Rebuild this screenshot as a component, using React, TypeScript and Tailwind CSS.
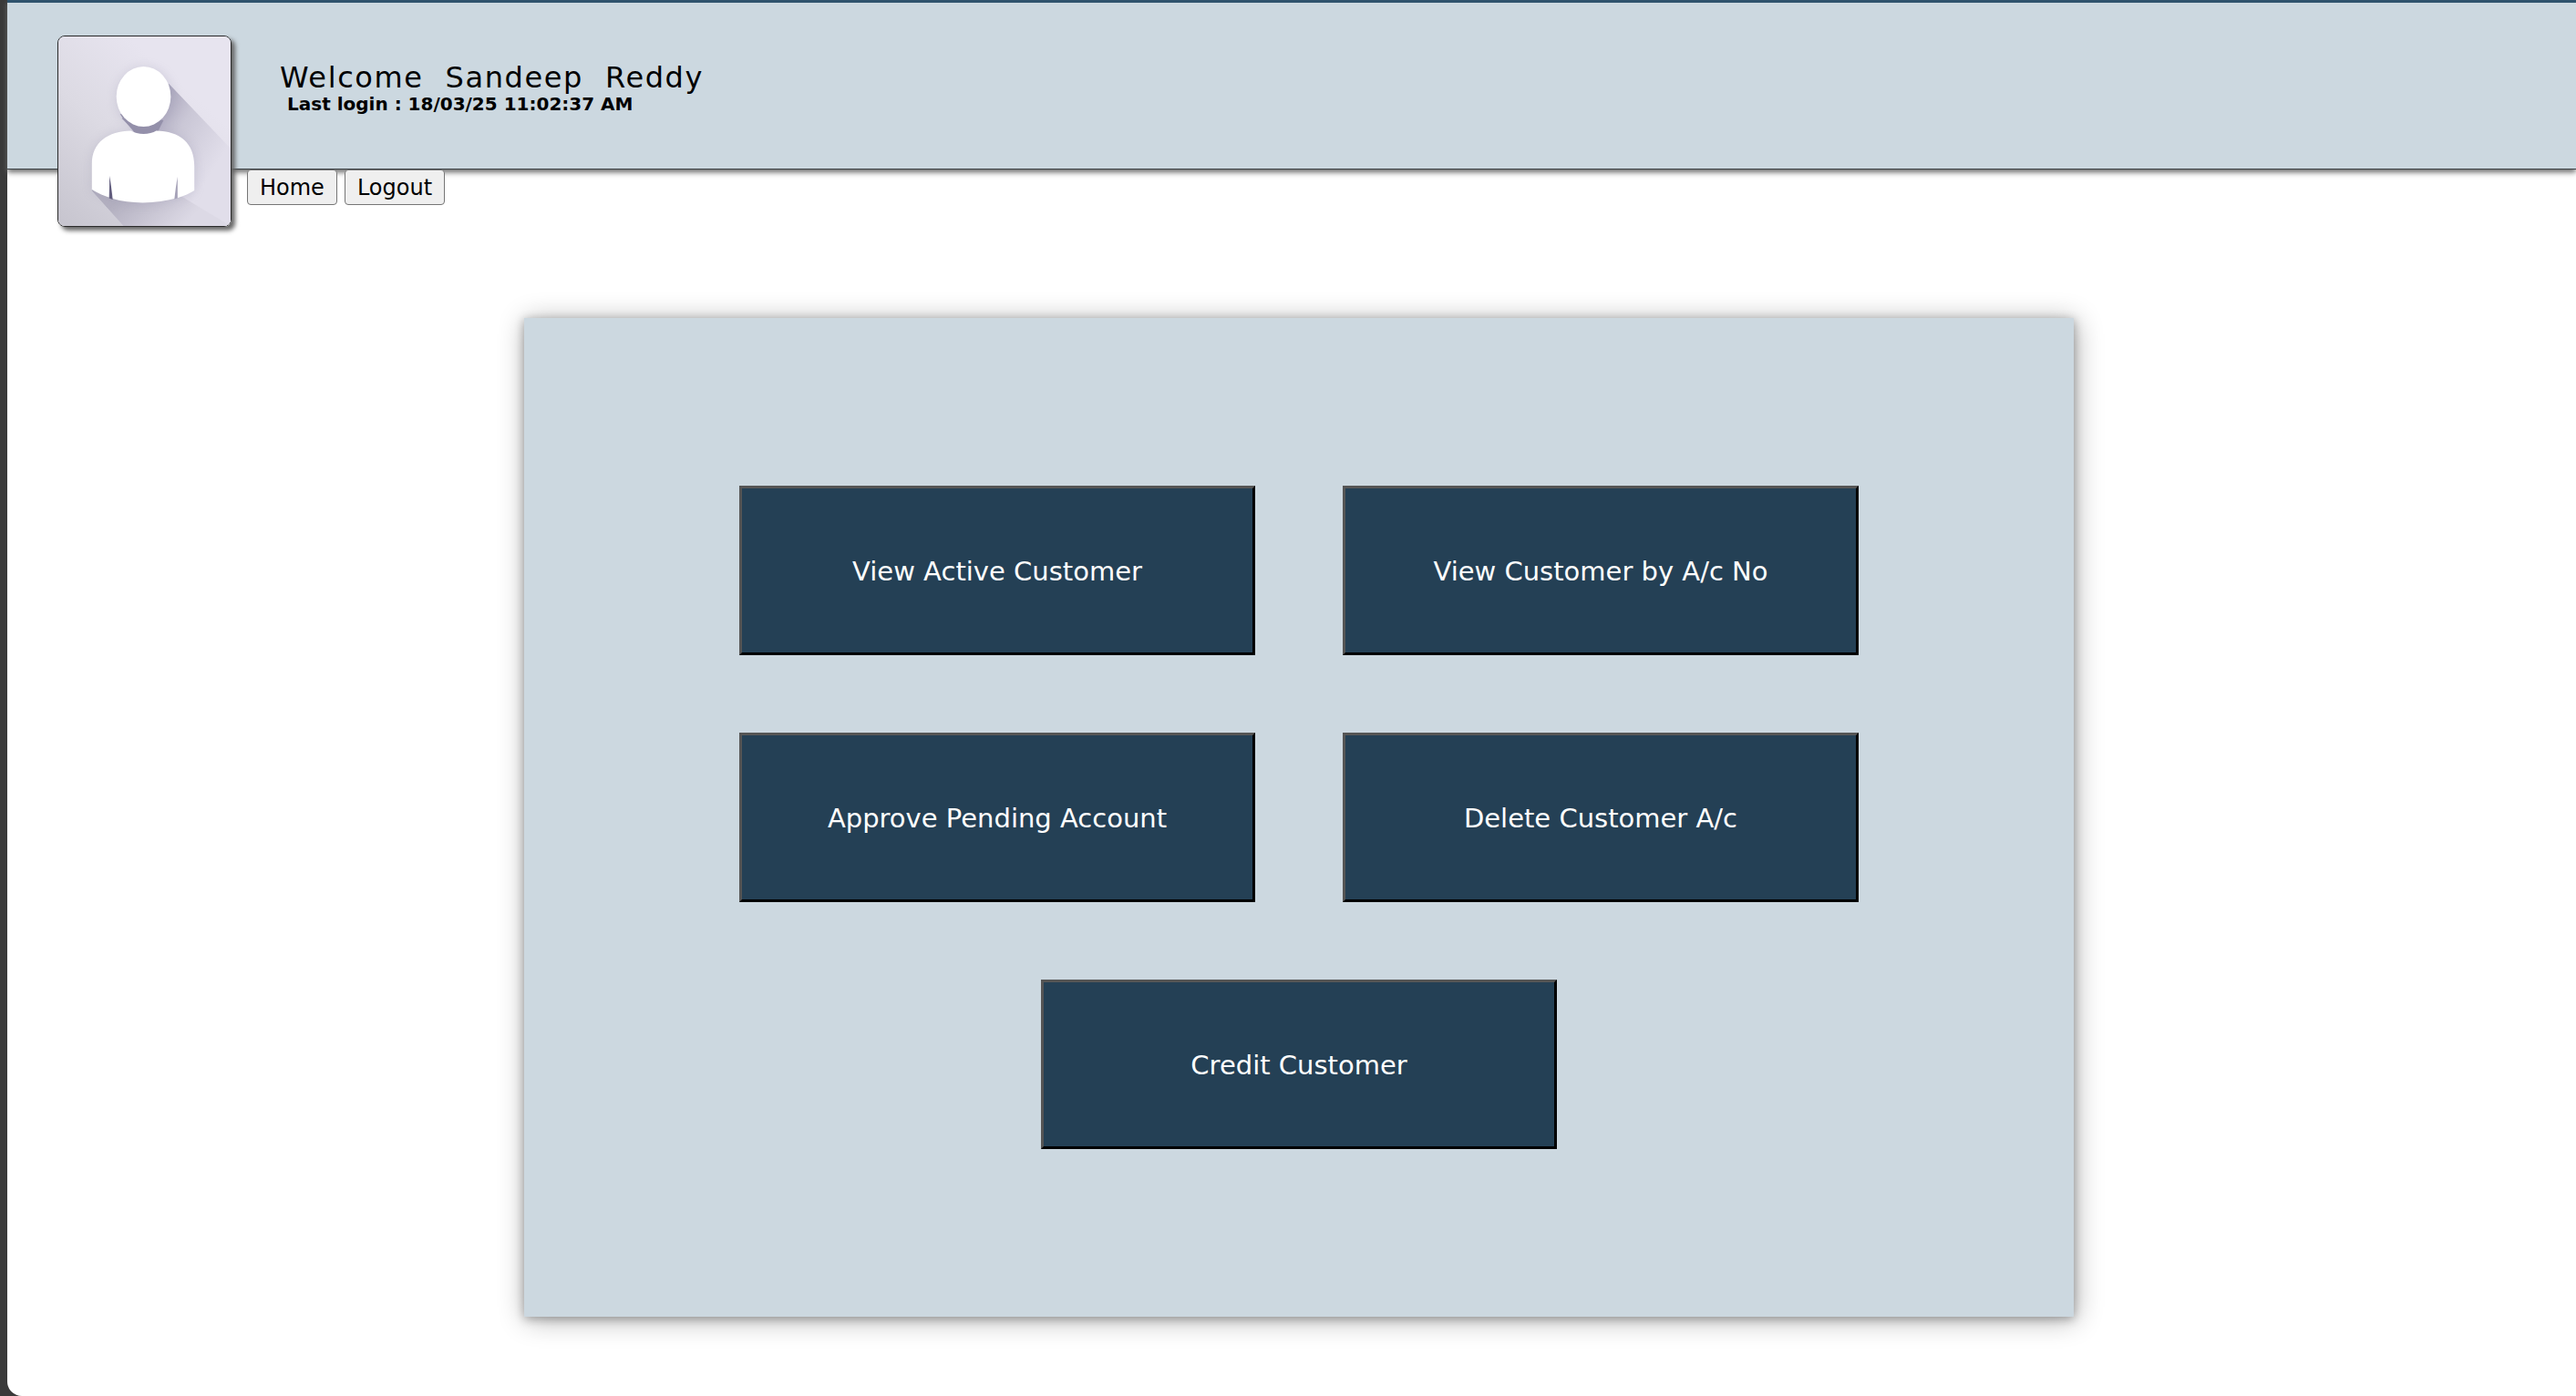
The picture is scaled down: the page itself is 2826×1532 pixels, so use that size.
import React from "react";

const actionRows: string[][] = [
  ["View Active Customer", "View Customer by A/c No"],
  ["Approve Pending Account", "Delete Customer A/c"],
  ["Credit Customer"],
];

function Avatar() {
  return (
    <svg viewBox="0 0 190 208" preserveAspectRatio="none" className="block h-full w-full" role="img" aria-label="Profile picture">
      <defs>
        <linearGradient id="backdrop" x1="0" y1="1" x2="0.65" y2="0.2">
          <stop offset="0" stopColor="#c6c4ce" />
          <stop offset="0.55" stopColor="#dcdae3" />
          <stop offset="1" stopColor="#e7e4ef" />
        </linearGradient>
        <linearGradient id="cast" gradientUnits="userSpaceOnUse" x1="90" y1="85" x2="175" y2="140">
          <stop offset="0" stopColor="#a19db5" />
          <stop offset="0.45" stopColor="#cac7d6" />
          <stop offset="1" stopColor="#e1deea" />
        </linearGradient>
        <linearGradient id="castLow" gradientUnits="userSpaceOnUse" x1="70" y1="175" x2="120" y2="225">
          <stop offset="0" stopColor="#b3b0c0" />
          <stop offset="1" stopColor="#dcd9e5" />
        </linearGradient>
        <filter id="halo" x="-30%" y="-30%" width="160%" height="160%">
          <feGaussianBlur stdDeviation="6" />
        </filter>
      </defs>
      <rect width="190" height="208" fill="url(#backdrop)" />
      <path d="M122 52L190 123V208H72L37 169L85 105L70 90Z" fill="url(#cast)" />
      <path d="M37 169L72 208H190V208L110 160Z" fill="url(#castLow)" />
      <g filter="url(#halo)" fill="#8f8ba8" opacity="0.25">
        <ellipse cx="95" cy="68" rx="31" ry="34" />
        <path d="M37 169V140C37 116 56 104 80 104H110C134 104 150 118 150 142V169C120 188 67 188 37 169Z" />
      </g>
      <path d="M68 85C73 93 79 99 86 108H108L116 92Z" fill="#9490aa" />
      <ellipse cx="94" cy="66" rx="30" ry="33" fill="#fff" />
      <path d="M37 168V140C37 116 55 104 80 103.500C87 108 101 108 108 103.500C134 104 150 117 150 142V169C145 172 139 175 132 177C108 184 80 184 60 178C51 175 43 172 37 168Z" fill="#fff" />
      <path d="M56.500 153C58 162 59 170 60 179L56 177.500Z" fill="#625d7e" />
      <path d="M131.500 154C130 162 129 170 128 178.500L131.500 177.500Z" fill="#a5a1b7" />
    </svg>
  );
}

export default function App() {
  return (
    <div className="bg-[#3a3a3a] pl-2 font-['DejaVu_Sans',sans-serif] text-black">
      <div className="min-h-screen rounded-bl-2xl bg-white">
        <header className="flex items-start gap-[53px] border-t-[3px] border-b border-t-[#2f536d] border-b-[#3c4145] bg-[#ccd8e0] pt-9 pl-[55px] shadow-[0_3px_6px_#666]">
          <div className="relative z-10 -mb-16 h-[210px] w-[191px] shrink-0 overflow-hidden rounded-lg border border-[#2a2a2a] shadow-[4px_4px_5px_#666]">
            <Avatar />
          </div>
          <div className="pt-[27px]">
            <h1 className="flex gap-6 text-[32px] leading-[38px] tracking-wider">
              <span>Welcome</span>
              <span>Sandeep</span>
              <span>Reddy</span>
            </h1>
            <p className="pl-2 text-[20px] leading-[20px] font-bold">Last login : 18/03/25 11:02:37 AM</p>
          </div>
        </header>

        <nav className="relative flex gap-2 pl-[263px]">
          <button type="button" className="h-[39px] rounded-[4px] border border-[#767676] bg-[#efefef] px-[13px] pt-px text-[24px] leading-[36px]">Home</button>
          <button type="button" className="h-[39px] rounded-[4px] border border-[#767676] bg-[#efefef] px-[13px] pt-px text-[24px] leading-[36px]">Logout</button>
        </nav>

        <main className="pt-[124px] pb-[87px] pl-4">
          <section className="mx-auto flex w-full max-w-[1700px] flex-col gap-[85px] bg-[#ccd8e0] px-8 py-[184px] shadow-[0_2px_10px_rgba(0,0,0,0.3),2px_3px_28px_rgba(0,0,0,0.32)]">
            {actionRows.map((row) => (
              <div key={row[0]} className="flex justify-center gap-24">
                {row.map((label) => (
                  <button
                    key={label}
                    type="button"
                    className="h-[186px] w-full max-w-[566px] border-[3px] border-t-[#555] border-r-black border-b-black border-l-[#555] bg-[#244055] pt-1 text-[29px] text-white"
                  >
                    {label}
                  </button>
                ))}
              </div>
            ))}
          </section>
        </main>
      </div>
    </div>
  );
}
